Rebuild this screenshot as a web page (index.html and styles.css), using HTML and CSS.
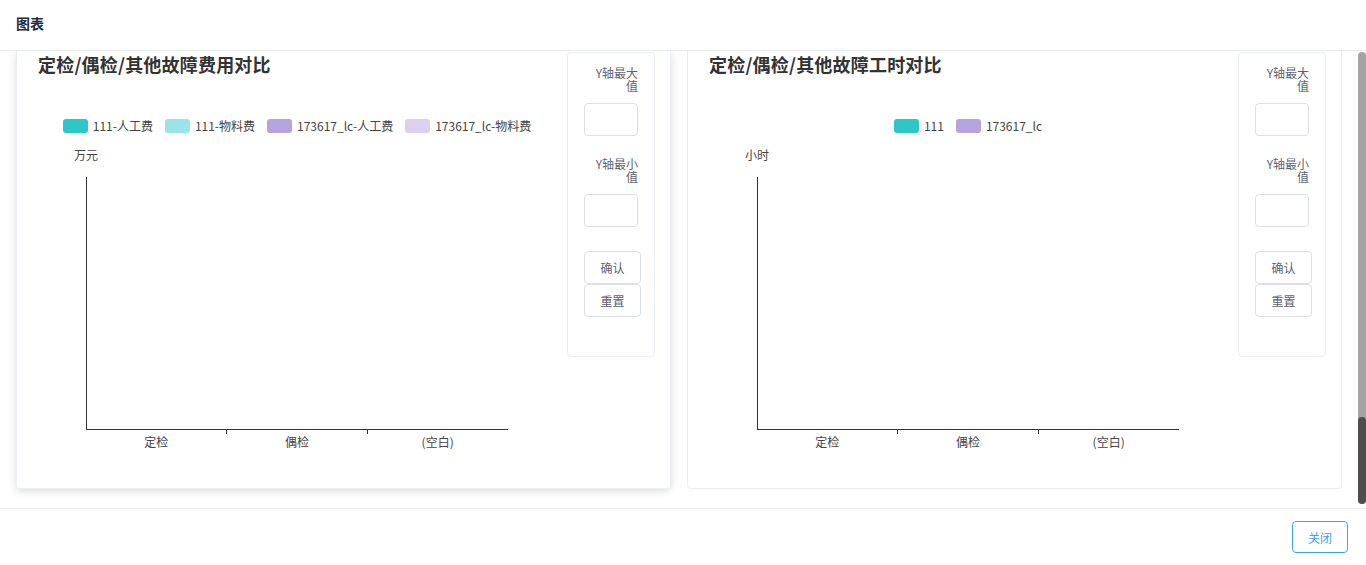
FILE: index.html
```html
<!DOCTYPE html>
<html lang="zh-CN">
<head>
<meta charset="utf-8">
<title>图表</title>
<link rel="stylesheet" href="styles.css">
</head>
<body>
<div class="dialog">
  <header class="dlg-header">图表</header>
  <main class="dlg-body">
    <div class="cards">
      <section class="card card-hover">
        <div class="chart-col">
          <h2 class="chart-title">定检/偶检/其他故障费用对比</h2>
          <ul class="legend">
            <li><span class="chip c1"></span>111-人工费</li>
            <li><span class="chip c2"></span>111-物料费</li>
            <li><span class="chip c3"></span>173617_lc-人工费</li>
            <li><span class="chip c4"></span>173617_lc-物料费</li>
          </ul>
          <div class="unit">万元</div>
          <div class="plot"></div>
          <div class="ticks"><span></span><span></span><span></span></div>
          <div class="xlabels"><span>定检</span><span>偶检</span><span>(空白)</span></div>
        </div>
        <aside class="panel">
          <label class="plabel">Y轴最大值</label>
          <input class="pinput" type="text">
          <label class="plabel plabel-2">Y轴最小值</label>
          <input class="pinput" type="text">
          <button class="pbtn pbtn-first">确认</button>
          <button class="pbtn">重置</button>
        </aside>
      </section>
      <section class="card">
        <div class="chart-col">
          <h2 class="chart-title">定检/偶检/其他故障工时对比</h2>
          <ul class="legend">
            <li><span class="chip c1"></span>111</li>
            <li><span class="chip c3"></span>173617_lc</li>
          </ul>
          <div class="unit">小时</div>
          <div class="plot"></div>
          <div class="ticks"><span></span><span></span><span></span></div>
          <div class="xlabels"><span>定检</span><span>偶检</span><span>(空白)</span></div>
        </div>
        <aside class="panel">
          <label class="plabel">Y轴最大值</label>
          <input class="pinput" type="text">
          <label class="plabel plabel-2">Y轴最小值</label>
          <input class="pinput" type="text">
          <button class="pbtn pbtn-first">确认</button>
          <button class="pbtn">重置</button>
        </aside>
      </section>
    </div>
    <div class="scrollbar"><div class="thumb"></div></div>
  </main>
  <footer class="dlg-footer">
    <button class="close-btn">关闭</button>
  </footer>
</div>
</body>
</html>
```

FILE: styles.css
```css
* { box-sizing: border-box; }
html, body { margin: 0; padding: 0; background: #fff; }
body {
  font-family: "Noto Sans CJK SC", "Liberation Sans", sans-serif;
  color: #333;
  width: 1366px;
  height: 565px;
  overflow: hidden;
}
.dialog {
  display: flex;
  flex-direction: column;
  height: 565px;
}
.dlg-header {
  height: 51px;
  flex: none;
  border-bottom: 1px solid #e8eaee;
  padding: 0 16px;
  font-size: 14px;
  font-weight: 600;
  line-height: 47px;
  color: #1f2d3d;
}
.dlg-body {
  position: relative;
  height: 457px;
  flex: none;
  overflow: hidden;
}
.cards {
  display: flex;
  gap: 16px;
  padding-left: 16px;
}
.card {
  width: 655px;
  height: 438px;
  border: 1px solid #ebeef5;
  border-top: none;
  border-radius: 0 0 4px 4px;
  background: #fff;
  padding: 1px 15px 20px 21px;
  display: flex;
  gap: 11px;
}
.card-hover {
  box-shadow: 0 2px 8px 0 rgba(0, 0, 0, 0.14);
}
.chart-col {
  width: 518px;
  display: flex;
  flex-direction: column;
}
.chart-title {
  margin: 0;
  font-size: 18px;
  line-height: 24px;
  font-weight: 700;
  color: #333;
  white-space: nowrap;
  letter-spacing: 0.2px;
}
.legend {
  list-style: none;
  margin: 43px 0 0;
  padding: 0;
  display: flex;
  justify-content: center;
  gap: 12px;
  font-size: 12px;
  line-height: 14px;
  color: #444;
}
.legend li {
  display: flex;
  align-items: center;
  white-space: nowrap;
}
.chip {
  width: 25px;
  height: 14px;
  border-radius: 3px;
  margin-right: 5px;
}
.c1 { background: #2ec7c9; }
.c2 { background: #9ae4e5; }
.c3 { background: #b6a2de; }
.c4 { background: #dbd0ef; }
.unit {
  margin: 15px 0 0 36px;
  font-size: 12px;
  line-height: 14px;
  width: 24px;
  text-align: center;
  white-space: nowrap;
  color: #444;
}
.plot {
  margin: 15px 48px 0;
  height: 253px;
  border-left: 1px solid #333;
  border-bottom: 1px solid #333;
}
.ticks {
  margin: 0 48px;
  height: 4px;
  display: flex;
}
.ticks span {
  flex: 1;
}
.ticks span + span {
  border-left: 1px solid #333;
}
.xlabels {
  margin: 1px 48px 0;
  display: flex;
  font-size: 12px;
  line-height: 14px;
  color: #444;
}
.xlabels span {
  flex: 1;
  text-align: center;
}
.panel {
  width: 88px;
  height: 305px;
  border: 1px solid #ebeef5;
  border-radius: 4px;
  padding: 13px 16px 0;
  display: flex;
  flex-direction: column;
  align-items: flex-start;
}
.plabel {
  width: 54px;
  font-size: 12px;
  line-height: 13px;
  text-align: right;
  color: #5e6270;
}
.plabel-2 { margin-top: 21px; }
.pinput {
  width: 54px;
  height: 33px;
  margin-top: 11px;
  border: 1px solid #dcdfe6;
  border-radius: 4px;
  background: #fff;
  outline: none;
  padding: 0;
}
.pbtn {
  width: 57px;
  height: 33px;
  border: 1px solid #dcdfe6;
  border-radius: 4px;
  background: #fff;
  font-family: inherit;
  font-size: 12px;
  color: #5e6270;
  padding: 0;
}
.pbtn-first { margin-top: 24px; }
.scrollbar {
  position: absolute;
  right: 0;
  top: 1px;
  width: 8px;
  height: 452px;
  background: #a3a3a3;
  border-radius: 4px;
}
.thumb {
  position: absolute;
  left: 0;
  bottom: 0;
  width: 8px;
  height: 87px;
  background: #4d4d4d;
  border-radius: 4px;
}
.dlg-footer {
  flex: 1;
  border-top: 1px solid #e8eaee;
  display: flex;
  justify-content: flex-end;
  align-items: flex-start;
  padding: 12px 18px 0 0;
}
.close-btn {
  width: 56px;
  height: 32px;
  border: 1px solid #409eff;
  border-radius: 4px;
  background: #fff;
  color: #409eff;
  font-family: inherit;
  font-size: 12px;
  padding: 0;
}
```
